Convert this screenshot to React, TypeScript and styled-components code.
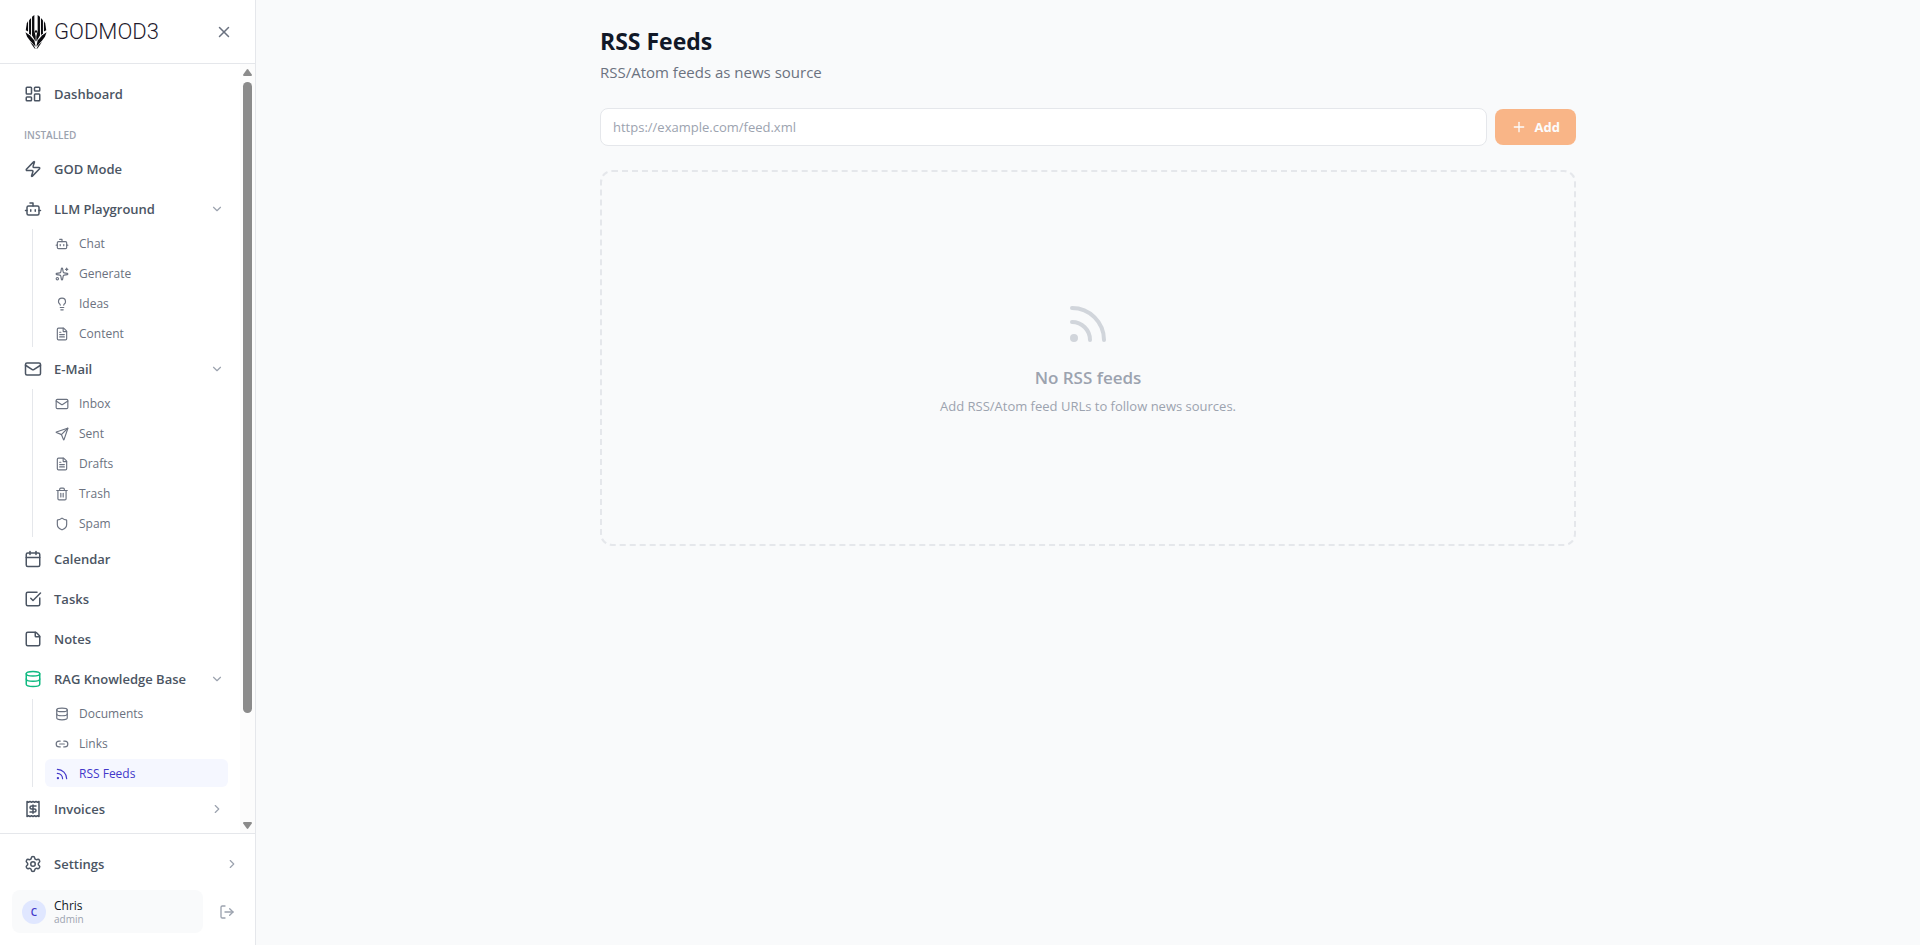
import React from 'react';
import styled, { createGlobalStyle } from 'styled-components';
import {
  Bot, Calendar, ChevronDown, ChevronRight, Database, FileText, LayoutDashboard, Lightbulb, Link2,
  LogOut, Mail, Plus, Receipt, Rss, Send, Settings, Shield, Sparkles, SquareCheckBig, StickyNote,
  Trash2, X, Zap,
} from 'lucide-react';
import type { LucideIcon } from 'lucide-react';

const GlobalStyle = createGlobalStyle`
  *, *::before, *::after { box-sizing: border-box; }
  body { margin: 0; background: #f9fafb; color: #111827; }
  body, button, input { font-family: 'Segoe UI', 'Open Sans', 'Noto Sans', sans-serif; }
  h1, h2, p, ul { margin: 0; padding: 0; }
  ul { list-style: none; }
  a { color: inherit; text-decoration: none; }
  button { border: 0; background: none; padding: 0; cursor: pointer; color: inherit; }
  svg { display: block; flex-shrink: 0; }
`;

const Shell = styled.div`
  display: flex;
  height: 100vh;
`;

const Sidebar = styled.aside`
  display: flex;
  flex-direction: column;
  flex: 0 0 256px;
  background: #fff;
  border-right: 1px solid #e5e7eb;
`;

const SidebarHeader = styled.header`
  display: flex;
  align-items: center;
  justify-content: space-between;
  flex: 0 0 64px;
  padding: 0 16px 0 25px;
  border-bottom: 1px solid #e5e7eb;
`;

const Brand = styled.a`
  display: flex;
  align-items: center;
  gap: 7px;
`;

const Wordmark = styled.span`
  font-family: 'Liberation Sans Narrow', 'Roboto', sans-serif;
  font-weight: 300;
  font-size: 22px;
  line-height: 32px;
  color: #1f1b2e;
`;

const CloseButton = styled.button`
  padding: 6px;
  color: #6b7280;
`;

const ScrollArea = styled.div`
  display: flex;
  flex: 1;
  min-height: 0;
`;

const Nav = styled.nav`
  flex: 1;
  min-width: 0;
  overflow: hidden;
  padding: 12px;
`;

const NavList = styled.ul`
  display: flex;
  flex-direction: column;
  gap: 4px;
`;

const SectionLabel = styled.li`
  padding: 12px 12px 4px;
  font-size: 10px;
  font-weight: 600;
  line-height: 15px;
  color: #9ca3af;
  text-transform: uppercase;
`;

const NavRow = styled.div`
  display: flex;
  align-items: center;
  height: 36px;
`;

const NavLink = styled.a<{ $iconColor?: string }>`
  display: flex;
  flex: 1;
  align-items: center;
  gap: 12px;
  padding-left: 12px;
  font-size: 13px;
  font-weight: 600;
  line-height: 20px;
  white-space: nowrap;
  color: #4b5563;
  svg { color: ${(p) => p.$iconColor ?? 'inherit'}; }
`;

const ToggleButton = styled.button`
  padding: 4px;
  color: #9ca3af;
`;

const SubList = styled.ul`
  display: flex;
  flex-direction: column;
  gap: 2px;
  margin: 2px 0 0 20px;
  padding-left: 12px;
  border-left: 1px solid #e5e7eb;
`;

const SubLink = styled.a<{ $active?: boolean }>`
  display: flex;
  align-items: center;
  gap: 10px;
  height: 28px;
  padding: 2px 10px 0;
  border-radius: 6px;
  font-size: 12px;
  font-weight: 500;
  line-height: 16px;
  color: ${(p) => (p.$active ? '#4338ca' : '#6b7280')};
  background: ${(p) => (p.$active ? '#f5f7ff' : 'transparent')};
`;

const ScrollBar = styled.div`
  display: flex;
  flex-direction: column;
  align-items: center;
  flex: 0 0 15px;
  padding: 5px 0 4px;
  background: #fcfcfc;
  color: #8b8b8b;
`;

const ScrollTrack = styled.div`
  flex: 1;
  width: 9px;
  margin: 6px 0;
`;

const ScrollThumb = styled.div`
  height: 86%;
  border-radius: 5px;
  background: #8b8b8b;
`;

const SidebarFooter = styled.footer`
  padding: 12px;
  border-top: 1px solid #e5e7eb;
`;

const UserRow = styled.div`
  display: flex;
  align-items: center;
  gap: 8px;
  margin-top: 8px;
`;

const UserCard = styled.a`
  display: flex;
  flex: 1;
  align-items: center;
  gap: 8px;
  height: 43px;
  padding: 0 10px;
  border-radius: 8px;
  background: #f9fafb;
`;

const Avatar = styled.span`
  display: grid;
  place-items: center;
  width: 24px;
  height: 24px;
  border-radius: 50%;
  background: #e0e7ff;
  color: #4338ca;
  font-size: 10px;
  font-weight: 600;
`;

const UserText = styled.span`
  display: flex;
  flex-direction: column;
`;

const UserName = styled.span`
  font-size: 12px;
  font-weight: 500;
  line-height: 15px;
`;

const UserRole = styled.span`
  font-size: 10px;
  line-height: 13px;
  color: #9ca3af;
`;

const LogoutButton = styled.button`
  padding: 8px;
  color: #9ca3af;
`;

const Main = styled.main`
  flex: 1;
  min-width: 0;
  overflow: auto;
`;

const Content = styled.div`
  max-width: 1024px;
  margin: 0 auto;
  padding: 24px;
`;

const Title = styled.h1`
  font-size: 23px;
  font-weight: 700;
  line-height: 34px;
`;

const Subtitle = styled.p`
  margin-top: 2px;
  font-size: 15px;
  line-height: 24px;
  color: #6b7280;
`;

const FeedForm = styled.form`
  display: flex;
  align-items: center;
  gap: 8px;
  margin: 24px 0;
`;

const UrlInput = styled.input`
  flex: 1;
  min-width: 0;
  height: 38px;
  padding: 0 12px;
  border: 1px solid #e5e7eb;
  border-radius: 8px;
  background: #fff;
  font-size: 13px;
  line-height: 20px;
  &::placeholder { color: #9ca3af; opacity: 1; }
`;

const AddButton = styled.button`
  display: flex;
  align-items: center;
  gap: 8px;
  height: 36px;
  padding: 0 16px;
  border-radius: 8px;
  background: #f97316;
  color: #fff;
  font-size: 13px;
  font-weight: 700;
  line-height: 20px;
  &:disabled { opacity: 0.5; cursor: default; }
`;

const EmptyState = styled.section`
  display: flex;
  flex-direction: column;
  align-items: center;
  padding: 128px 24px;
  border: 2px dashed #e5e7eb;
  border-radius: 12px;
  color: #9ca3af;
  text-align: center;
  svg { color: #d1d5db; }
`;

const EmptyTitle = styled.h2`
  margin-top: 16px;
  font-size: 17px;
  font-weight: 600;
  line-height: 28px;
`;

const EmptyText = styled.p`
  margin-top: 4px;
  font-size: 13px;
  line-height: 20px;
`;

interface SubItem { label: string; icon: LucideIcon; active?: boolean }
interface Item { label: string; icon: LucideIcon; iconColor?: string; children?: SubItem[]; collapsed?: boolean }

const installed: Item[] = [
  { label: 'GOD Mode', icon: Zap },
  {
    label: 'LLM Playground', icon: Bot, children: [
      { label: 'Chat', icon: Bot },
      { label: 'Generate', icon: Sparkles },
      { label: 'Ideas', icon: Lightbulb },
      { label: 'Content', icon: FileText },
    ],
  },
  {
    label: 'E-Mail', icon: Mail, children: [
      { label: 'Inbox', icon: Mail },
      { label: 'Sent', icon: Send },
      { label: 'Drafts', icon: FileText },
      { label: 'Trash', icon: Trash2 },
      { label: 'Spam', icon: Shield },
    ],
  },
  { label: 'Calendar', icon: Calendar },
  { label: 'Tasks', icon: SquareCheckBig },
  { label: 'Notes', icon: StickyNote },
  {
    label: 'RAG Knowledge Base', icon: Database, iconColor: '#10b981', children: [
      { label: 'Documents', icon: Database },
      { label: 'Links', icon: Link2 },
      { label: 'RSS Feeds', icon: Rss, active: true },
    ],
  },
  { label: 'Invoices', icon: Receipt, collapsed: true },
];

function NavEntry({ item }: { item: Item }) {
  const Icon = item.icon;
  const Chevron = item.collapsed ? ChevronRight : ChevronDown;
  return (
    <NavRow>
      <NavLink href="#" $iconColor={item.iconColor}>
        <Icon size={18} />
        {item.label}
      </NavLink>
      {(item.children || item.collapsed) && (
        <ToggleButton type="button" aria-label={`Toggle ${item.label}`} aria-expanded={!item.collapsed}>
          <Chevron size={14} />
        </ToggleButton>
      )}
    </NavRow>
  );
}

function LogoHalf() {
  return (
    <>
      <path d="M20 5 L27 0 L27 48 L31 64 L31 80 L20 62 Z" />
      <path d="M11 16 L17 9 L17 61 L11 55 Z" />
      <path d="M4 26 L8 18 L8 50 L1 46 Z" />
      <path d="M0 52 L13 61 L27 77 L31 96 L14 78 L5 66 Z" />
      <path d="M14 82 L24 90 L31 103 L27 101 Z" />
    </>
  );
}

function LogoMark() {
  return (
    <svg width="22" height="34" viewBox="0 0 64 103" fill="#0b0b0f" aria-hidden="true">
      <LogoHalf />
      <g transform="matrix(-1 0 0 1 64 0)"><LogoHalf /></g>
      <path d="M32 45 L36 50 L32 55 L28 50 Z" />
    </svg>
  );
}

export default function App() {
  return (
    <>
      <GlobalStyle />
      <Shell>
        <Sidebar>
          <SidebarHeader>
            <Brand href="#">
              <LogoMark />
              <Wordmark>GODMOD3</Wordmark>
            </Brand>
            <CloseButton type="button" aria-label="Close sidebar"><X size={18} /></CloseButton>
          </SidebarHeader>
          <ScrollArea>
            <Nav aria-label="Main">
              <NavList>
                <li><NavEntry item={{ label: 'Dashboard', icon: LayoutDashboard }} /></li>
                <SectionLabel>Installed</SectionLabel>
                {installed.map((item) => (
                  <li key={item.label}>
                    <NavEntry item={item} />
                    {item.children && (
                      <SubList>
                        {item.children.map(({ label, icon: Icon, active }) => (
                          <li key={label}>
                            <SubLink href="#" $active={active} aria-current={active ? 'page' : undefined}>
                              <Icon size={14} />
                              {label}
                            </SubLink>
                          </li>
                        ))}
                      </SubList>
                    )}
                  </li>
                ))}
              </NavList>
            </Nav>
            <ScrollBar aria-hidden="true">
              <svg width="9" height="7" viewBox="0 0 9 7" fill="currentColor"><path d="M3.8 .4Q4.5-.3 5.2.4L8.8 5.6Q9.2 7 8 7H1Q-.2 7 .2 5.6Z" /></svg>
              <ScrollTrack><ScrollThumb /></ScrollTrack>
              <svg width="9" height="7" viewBox="0 0 9 7" fill="currentColor"><path d="M3.8 6.6Q4.5 7.3 5.2 6.6L8.8 1.4Q9.2 0 8 0H1Q-.2 0 .2 1.4Z" /></svg>
            </ScrollBar>
          </ScrollArea>
          <SidebarFooter>
            <NavEntry item={{ label: 'Settings', icon: Settings, collapsed: true }} />
            <UserRow>
              <UserCard href="#">
                <Avatar>C</Avatar>
                <UserText>
                  <UserName>Chris</UserName>
                  <UserRole>admin</UserRole>
                </UserText>
              </UserCard>
              <LogoutButton type="button" aria-label="Log out"><LogOut size={16} /></LogoutButton>
            </UserRow>
          </SidebarFooter>
        </Sidebar>
        <Main>
          <Content>
            <Title>RSS Feeds</Title>
            <Subtitle>RSS/Atom feeds as news source</Subtitle>
            <FeedForm>
              <UrlInput type="url" aria-label="Feed URL" placeholder="https://example.com/feed.xml" />
              <AddButton type="submit" disabled><Plus size={16} />Add</AddButton>
            </FeedForm>
            <EmptyState>
              <Rss size={48} />
              <EmptyTitle>No RSS feeds</EmptyTitle>
              <EmptyText>Add RSS/Atom feed URLs to follow news sources.</EmptyText>
            </EmptyState>
          </Content>
        </Main>
      </Shell>
    </>
  );
}
